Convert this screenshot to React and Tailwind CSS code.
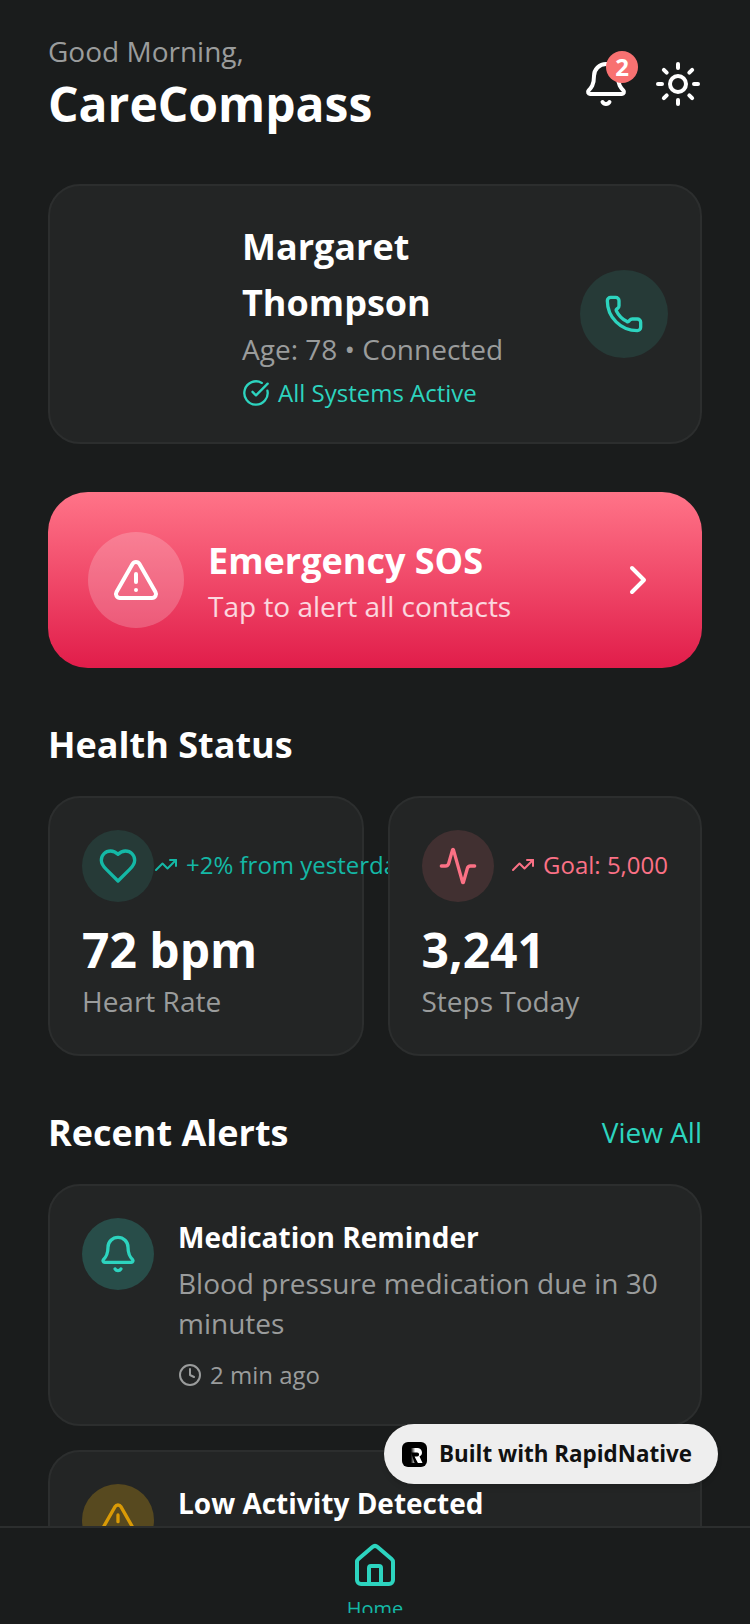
import { Bell, Sun, Phone, CircleCheckBig, TriangleAlert, ChevronRight, Activity, TrendingUp, Clock, House } from 'lucide-react';

const font = { fontFamily: '"Open Sans", sans-serif' };

function HeartIcon({ size, className }) {
  return (
    <svg width={size} height={size} viewBox="0 0 24 24" fill="none" stroke="currentColor" strokeWidth="2" strokeLinecap="round" strokeLinejoin="round" className={className}>
      <path d="M19 14c1.49-1.46 3-3.21 3-5.5A5.5 5.5 0 0 0 16.5 3c-1.76 0-3 .5-4.5 2-1.5-1.5-2.74-2-4.5-2A5.5 5.5 0 0 0 2 8.5c0 2.3 1.5 4.05 3 5.5l7 7Z" />
    </svg>
  );
}

function StatCard({ icon: Icon, iconBg, color, trend, value, label, className }) {
  return (
    <div className={`relative h-[260px] rounded-[32px] border-2 border-[#2c2e2e] bg-[#232525] p-[32px] ${className}`}>
      <div className="flex items-center justify-between">
        <div className={`flex h-[72px] w-[72px] shrink-0 items-center justify-center rounded-full ${iconBg}`}>
          <Icon size={40} className={color} />
        </div>
        <div className={`mb-[2px] flex shrink-0 items-center gap-[8px] text-[24px] leading-[32px] whitespace-nowrap ${color}`}>
          <TrendingUp size={24} />
          <span>{trend}</span>
        </div>
      </div>
      <div className="mt-[16px] text-[48px] leading-[64px] font-bold text-white">{value}</div>
      <div className="-mt-[1px] text-[28px] leading-[40px] text-[#9a9c9c]">{label}</div>
    </div>
  );
}

function AlertCard({ icon: Icon, iconBg, iconColor, title, body, time }) {
  return (
    <div className="flex gap-[24px] rounded-[32px] border-2 border-[#2c2e2e] bg-[#232525] p-[32px]">
      <div className={`flex h-[72px] w-[72px] shrink-0 items-center justify-center rounded-full ${iconBg}`}>
        <Icon size={40} className={iconColor} />
      </div>
      <div className="min-w-0 flex-1">
        <div className="-mt-[1px] text-[28px] leading-[40px] font-bold text-white">{title}</div>
        <div className="mt-[6px] text-[28px] leading-[40px] text-[#9a9c9c]">{body}</div>
        <div className="mt-[16px] mb-[1px] flex items-center gap-[8px] text-[24px] leading-[32px] text-[#9a9c9c]">
          <Clock size={24} />
          <span>{time}</span>
        </div>
      </div>
    </div>
  );
}

export default function App() {
  return (
    <div className="relative flex h-[1624px] w-[750px] flex-col overflow-hidden bg-[#1a1c1c]" style={font}>
      <div className="min-h-0 flex-1 overflow-hidden px-[48px]">
        {/* Header */}
        <div className="flex items-center justify-between pt-[31px]">
          <div>
            <div className="text-[28px] leading-[40px] text-[#9a9c9c]">Good Morning,</div>
            <div className="mt-[1px] text-[48px] leading-[64px] font-bold text-white">CareCompass</div>
          </div>
          <div className="flex items-center gap-[24px]">
            <div className="relative">
              <Bell size={48} className="text-white" />
              <div className="absolute -top-[9px] -right-[8px] flex h-[32px] w-[32px] items-center justify-center rounded-full bg-[#f87171] text-[24px] leading-[32px] font-bold text-white">2</div>
            </div>
            <Sun size={48} className="text-white" />
          </div>
        </div>

        {/* Patient */}
        <div className="mt-[48px] flex h-[260px] items-center rounded-[32px] border-2 border-[#2c2e2e] bg-[#232525] p-[32px]">
          <div className="w-[128px] shrink-0" />
          <div className="ml-[32px] min-w-0 flex-1">
            <div className="w-[260px] text-[36px] leading-[56px] font-bold text-white">Margaret Thompson</div>
            <div className="-mt-[2px] text-[28px] leading-[40px] text-[#9a9c9c]">Age: 78 • Connected</div>
            <div className="mt-[8px] flex items-center gap-[8px] text-[24px] leading-[32px] text-[#2dd4bf]">
              <CircleCheckBig size={28} />
              <span>All Systems Active</span>
            </div>
          </div>
          <div className="flex h-[88px] w-[88px] shrink-0 items-center justify-center rounded-full bg-[#263a37]">
            <Phone size={40} className="text-[#2dd4bf]" />
          </div>
        </div>

        {/* SOS */}
        <div className="mt-[48px] flex h-[176px] items-center rounded-[40px] bg-[linear-gradient(to_bottom,#ff7488,#e11d4a)] px-[40px]">
          <div className="flex h-[96px] w-[96px] shrink-0 items-center justify-center rounded-full bg-white/20">
            <TriangleAlert size={48} className="text-white" />
          </div>
          <div className="ml-[24px] flex-1 pt-[3px]">
            <div className="text-[36px] leading-[48px] font-bold text-white">Emergency SOS</div>
            <div className="mt-[1px] text-[28px] leading-[40px] text-white/80">Tap to alert all contacts</div>
          </div>
          <ChevronRight size={48} className="text-white" />
        </div>

        {/* Health */}
        <div className="mt-[49px] text-[36px] leading-[56px] font-bold text-white">Health Status</div>
        <div className="mt-[23px] flex gap-[24px]">
          <StatCard icon={HeartIcon} iconBg="bg-[#263a37]" color="text-[#14b8a6]" trend="+2% from yesterday" value="72 bpm" label="Heart Rate" className="w-[315.5px] shrink-0" />
          <StatCard icon={Activity} iconBg="bg-[#413031]" color="text-[#fb7185]" trend="Goal: 5,000" value="3,241" label="Steps Today" className="min-w-0 flex-1" />
        </div>

        {/* Alerts */}
        <div className="mt-[49px] flex items-center justify-between">
          <div className="text-[36px] leading-[56px] font-bold text-white">Recent Alerts</div>
          <div className="mb-[2px] text-[28px] leading-[40px] text-[#2dd4bf]">View All</div>
        </div>
        <div className="mt-[23px] flex flex-col gap-[24px]">
          <AlertCard icon={Bell} iconBg="bg-[#284d49]" iconColor="text-[#2dd4bf]" title="Medication Reminder" body="Blood pressure medication due in 30 minutes" time="2 min ago" />
          <AlertCard icon={TriangleAlert} iconBg="bg-[#57491f]" iconColor="text-[#d99a06]" title="Low Activity Detected" body="Activity is below the usual level" time="1 hour ago" />
        </div>
      </div>

      {/* Bottom nav */}
      <div className="h-[98px] shrink-0 border-t-2 border-[#2c2e2e] bg-[#1a1c1c]">
        <div className="flex h-[85px] flex-col items-center overflow-hidden pt-[14px]">
          <House size={48} className="shrink-0 text-[#2dd4bf]" />
          <div className="mt-[5px] shrink-0 text-[20px] leading-[28px] text-[#14b8a6]">Home</div>
        </div>
      </div>

      {/* Built with badge */}
      <div className="absolute top-[1424px] left-[384px] flex h-[60px] w-[334px] items-center gap-[12px] rounded-full bg-[#eeeeee] pl-[18px] shadow-md">
        <svg width="25" height="25" viewBox="0 0 25 25">
          <defs>
            <linearGradient id="rn" x1="0" x2="1" y1="0" y2="0">
              <stop offset="0.2" stopColor="#fff" stopOpacity="0" />
              <stop offset="0.5" stopColor="#fff" />
            </linearGradient>
          </defs>
          <rect width="25" height="25" rx="6" fill="#000" />
          <path d="M6 6h9.5a4.5 4.5 0 0 1 2 8.5L20.5 21h-4.6l-3.4-6.5h2.6a1.9 1.9 0 0 0 0-4H9l3.5 10.5H9z" fill="url(#rn)" />
        </svg>
        <span className="text-[22.4px] leading-[32px] font-bold text-[#111]">Built with RapidNative</span>
      </div>
    </div>
  );
}
